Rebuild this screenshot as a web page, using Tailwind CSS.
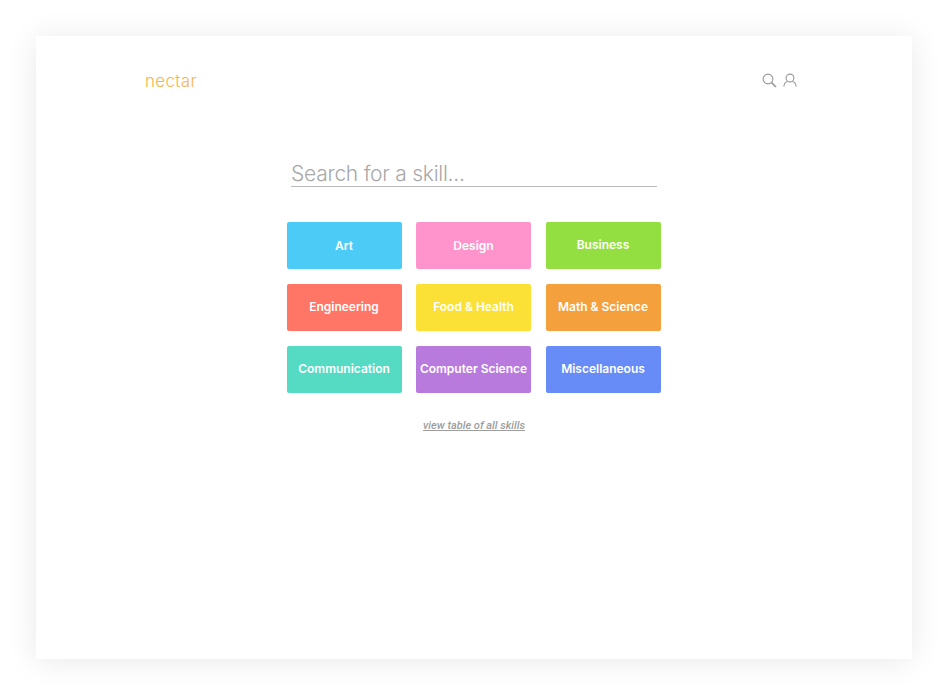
<!DOCTYPE html>
<html lang="en">
<head>
  <meta charset="UTF-8">
  <meta name="viewport" content="width=device-width, initial-scale=1.0">
  <title>nectar</title>
  <script src="https://cdn.jsdelivr.net/npm/@tailwindcss/browser@4"></script>
</head>
<body class="bg-white font-['Inter',sans-serif] w-[947px] h-[694px] overflow-hidden">
  <div class="pt-9 pl-9">
    <div class="w-[876px] h-[623px] bg-white shadow-[0_2px_30px_rgba(0,0,0,0.09)] pt-[32px]">
      <header class="flex items-center justify-between h-6 pl-[109px] pr-[115px]">
        <a class="pt-[2px] text-[17px] leading-6 font-light tracking-[0.3px] text-[#f7b44f]">nectar</a>
        <div class="flex items-center gap-[6px]">
          <svg width="15" height="15" viewBox="0 0 15 15" fill="none" stroke="#9a9a9a" stroke-width="1.1">
            <circle cx="6" cy="6" r="4.9"/>
            <path d="M9.6 9.6 14 14" stroke-width="1.7"/>
          </svg>
          <svg width="14" height="14" viewBox="0 0 14 14" fill="none" stroke="#9a9a9a" stroke-width="1.1">
            <circle cx="7" cy="5" r="3.9"/>
            <path d="M.8 13.5c.4-2.6 2-4.4 3.6-4.9M13.2 13.5c-.4-2.6-2-4.4-3.6-4.9"/>
          </svg>
        </div>
      </header>

      <main class="flex flex-col items-center pt-[57px]">
        <div class="w-[366px] h-[38px] pt-[10px] border-b-[1.5px] border-[#b9b9b9] text-[21px] leading-[30px] font-light tracking-[-0.25px] text-[#a8a8a8]">Search for a skill...</div>

        <div class="grid grid-cols-[115px_115px_115px] auto-rows-[47px] gap-x-[14.5px] gap-y-[15px] mt-[35px] -ml-[1px] text-[12px] font-semibold text-white">
          <button class="rounded-[2px] bg-[#4dcbf7]">Art</button>
          <button class="rounded-[2px] bg-[#ff94cc]">Design</button>
          <button class="rounded-[2px] bg-[#93df41] pb-[2px]">Business</button>
          <button class="rounded-[2px] bg-[#ff7566] pb-[1px]">Engineering</button>
          <button class="rounded-[2px] bg-[#fbe135] pb-[2px]">Food &amp; Health</button>
          <button class="rounded-[2px] bg-[#f4a03d] pb-[2px]">Math &amp; Science</button>
          <button class="rounded-[2px] bg-[#55dbc3] pb-[2px]">Communication</button>
          <button class="rounded-[2px] bg-[#b97ade] pb-[2px]">Computer Science</button>
          <button class="rounded-[2px] bg-[#678cf7] pb-[2px]">Miscellaneous</button>
        </div>

        <a class="mt-[25px] text-[11px] leading-4 font-['Roboto',sans-serif] font-medium italic underline text-[#9e9e9e]">view table of all skills</a>
      </main>
    </div>
  </div>
</body>
</html>
